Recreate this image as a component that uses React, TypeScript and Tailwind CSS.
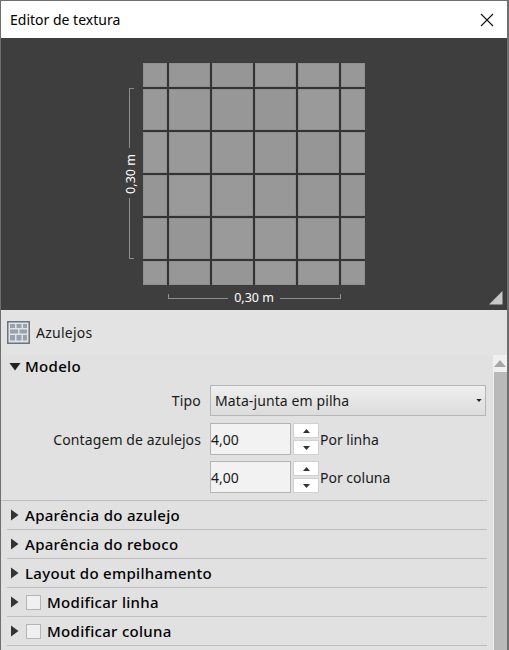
import React from "react";

const cols = [24, 41, 41, 41, 41, 24];
const rows = [24, 41, 41, 41, 41, 24];
const shades = ["#989898", "#9a9a9a", "#979797", "#999999", "#969696"];

function Tri({ open = false }: { open?: boolean }) {
  return open ? (
    <svg width="12" height="9" viewBox="0 0 12 9" className="shrink-0">
      <path d="M0.5 1H11.5L6 8.5Z" fill="#222" />
    </svg>
  ) : (
    <svg width="9" height="12" viewBox="0 0 9 12" className="shrink-0">
      <path d="M1 0.5V11.5L8.5 6Z" fill="#333" />
    </svg>
  );
}

function Section({ label, check = false }: { label: string; check?: boolean }) {
  return (
    <div className="h-[29px] flex items-center border-b border-[#bdbdbd] pl-[3px] mr-[6px]">
      <Tri />
      {check ? (
        <>
          <span className="w-[15px] h-[15px] ml-[7px] bg-[#f0f0f0] border border-[#b5b5b5] shrink-0" />
          <span className="ml-[6px] font-medium text-[15px] tracking-[0.3px] text-black">{label}</span>
        </>
      ) : (
        <span className="ml-[6px] font-medium text-[15px] tracking-[0.3px] text-black">{label}</span>
      )}
    </div>
  );
}

function Spinner() {
  return (
    <div className="flex flex-col w-[26px] ml-[2px] h-[32px] justify-between py-0">
      <div className="h-[15px] bg-white border border-[#d0d0d0] flex items-center justify-center">
        <svg width="7" height="4" viewBox="0 0 7 4"><path d="M0 4H7L3.5 0Z" fill="#333" /></svg>
      </div>
      <div className="h-[15px] bg-white border border-[#d0d0d0] flex items-center justify-center">
        <svg width="7" height="4" viewBox="0 0 7 4"><path d="M0 0H7L3.5 4Z" fill="#333" /></svg>
      </div>
    </div>
  );
}

function NumberRow({ label, unit }: { label?: string; unit: string }) {
  return (
    <div className="flex items-center h-[32px]">
      <div className="w-[200px] text-right text-[14px] tracking-[0.1px] text-[#1a1a1a] whitespace-nowrap">{label}</div>
      <div className="ml-[9px] w-[81px] h-[32px] bg-[#f2f2f2] border border-[#b4b4b4] flex items-center text-[14px] text-[#1a1a1a]">
        4,00
      </div>
      <Spinner />
      <span className="ml-[1px] text-[14px] text-[#1a1a1a]">{unit}</span>
    </div>
  );
}

export default function App() {
  return (
    <div
      className="w-[509px] h-[650px] overflow-hidden flex flex-col bg-[#e1e1e1] border-l border-t border-r-2 border-[#6e6e6e] text-black"
      style={{ fontFamily: '"Noto Sans", "Open Sans", sans-serif' }}
    >
      <div className="h-[37px] shrink-0 bg-white flex items-center justify-between pl-[9px] pr-[13px]">
        <span className="text-[14px] text-black">Editor de textura</span>
        <svg width="14" height="14" viewBox="0 0 14 14" fill="none" stroke="#111" strokeWidth="1.1">
          <path d="M1 1L13 13M13 1L1 13" />
        </svg>
      </div>

      <div className="relative h-[272px] shrink-0 bg-[#3e3e3e] pt-[25px] flex justify-center">
        <div
          className="grid gap-[2px] bg-[#333333] h-[222px] w-[222px]"
          style={{ gridTemplateColumns: cols.map((c) => c + "px").join(" "), gridTemplateRows: rows.map((r) => r + "px").join(" ") }}
        >
          {rows.flatMap((_, r) =>
            cols.map((_, c) => (
              <div
                key={r + "-" + c}
                className="border border-[#8f8f8f]"
                style={{ backgroundColor: shades[(r * 3 + c * 2) % shades.length] }}
              />
            ))
          )}
        </div>

        {/* vertical dimension */}
        <div className="absolute left-[128px] top-[50px] w-[5px] h-[1px] bg-[#8c8c8c]" />
        <div className="absolute left-[128px] top-[50px] w-[1px] h-[60px] bg-[#8c8c8c]" />
        <div className="absolute left-[128px] top-[160px] w-[1px] h-[61px] bg-[#8c8c8c]" />
        <div className="absolute left-[128px] top-[220px] w-[5px] h-[1px] bg-[#8c8c8c]" />
        <span className="absolute left-[100px] top-[127px] w-[60px] text-center text-[12.5px] leading-[18px] text-white -rotate-90">
          0,30 m
        </span>

        {/* horizontal dimension */}
        <div className="absolute left-[167px] top-[256px] w-[1px] h-[5px] bg-[#8c8c8c]" />
        <div className="absolute left-[167px] top-[260px] w-[60px] h-[1px] bg-[#8c8c8c]" />
        <div className="absolute left-[279px] top-[260px] w-[60px] h-[1px] bg-[#8c8c8c]" />
        <div className="absolute left-[339px] top-[256px] w-[1px] h-[5px] bg-[#8c8c8c]" />
        <span className="absolute left-[223px] top-[251px] w-[60px] text-center text-[12.5px] leading-[18px] text-white">
          0,30 m
        </span>

        {/* resize grip */}
        <svg className="absolute left-[488px] top-[253px]" width="14" height="14" viewBox="0 0 14 14">
          <path d="M0 13.5H13.5V0Z" fill="#c8c8c8" />
        </svg>
      </div>

      <div className="h-[45px] shrink-0 flex items-center pl-[6px] bg-[#e3e3e3]">
        <svg width="23" height="23" viewBox="0 0 23 23">
          <rect x="0.75" y="0.75" width="21.5" height="21.5" fill="#dfe2e6" stroke="#6a7480" strokeWidth="1.5" />
          <g fill="#98a2ae">
            <rect x="3" y="3" width="5" height="4" />
            <rect x="9.5" y="3" width="5" height="4" />
            <rect x="16" y="3" width="4" height="4" />
            <rect x="3" y="8.5" width="8" height="4" />
            <rect x="12.5" y="8.5" width="7.5" height="4" />
            <rect x="3" y="14" width="5" height="5.5" />
            <rect x="9.5" y="14" width="5" height="5.5" />
            <rect x="16" y="14" width="4" height="5.5" />
          </g>
        </svg>
        <span className="ml-[6px] text-[14px] tracking-[0.25px] text-[#1a1a1a]">Azulejos</span>
      </div>

      <div className="flex-1 flex min-h-0">
        <div className="flex-1 min-w-0 pl-[6px] pr-0">
          <div className="h-[22px] flex items-center pl-[2px]">
            <Tri open />
            <span className="ml-[4px] font-medium text-[15px] tracking-[0.3px] text-black">Modelo</span>
          </div>
          <div className="mr-[6px] border-b border-[#bdbdbd] pb-[7px] -ml-[6px] pl-[6px]">
            <div className="flex items-center h-[31px] mt-[8px]">
              <div className="w-[194px] text-right text-[14px] tracking-[0.2px] text-[#1a1a1a]">Tipo</div>
              <div className="ml-[9px] w-[276px] h-[31px] border border-[#b5b5b5] bg-gradient-to-b from-[#efefef] to-[#dcdcdc] flex items-center justify-between pl-[4px] pr-[3px] text-[14px] tracking-[0.1px] text-[#1a1a1a]">
                <span>Mata-junta em pilha</span>
                <svg width="6" height="3" viewBox="0 0 7 4"><path d="M0 0H7L3.5 4Z" fill="#222" /></svg>
              </div>
            </div>
            <div className="mt-[7px] -ml-[6px]">
              <NumberRow label="Contagem de azulejos" unit="Por linha" />
            </div>
            <div className="mt-[6px] -ml-[6px]">
              <NumberRow unit="Por coluna" />
            </div>
          </div>
          <Section label="Aparência do azulejo" />
          <Section label="Aparência do reboco" />
          <Section label="Layout do empilhamento" />
          <Section label="Modificar linha" check />
          <Section label="Modificar coluna" check />
        </div>

        <div className="w-[14px] shrink-0 bg-[#f0f0f0] flex flex-col items-center pt-[5px]">
          <svg width="12" height="7" viewBox="0 0 12 7" className="shrink-0">
            <path d="M0 7H12L6 0Z" fill="#a6a6a6" />
          </svg>
          <div className="mt-[5px] w-[13px] flex-1 bg-[#b9b9b9]" />
        </div>
      </div>
    </div>
  );
}
